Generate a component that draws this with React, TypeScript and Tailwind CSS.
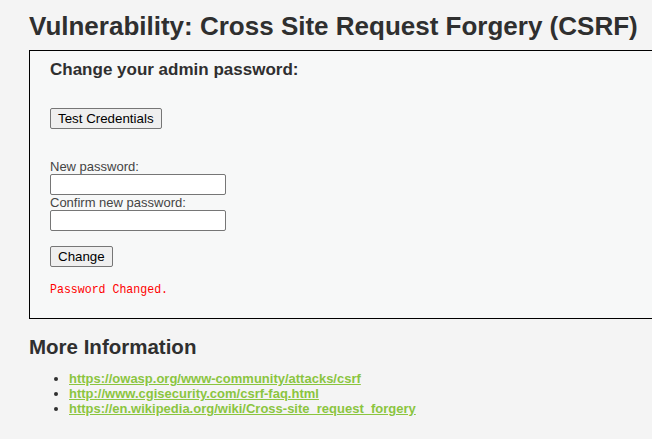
import React from "react";

export default function App() {
  return (
    <div className="w-[652px] h-[439px] overflow-hidden bg-[#f4f4f4] text-[#2f2f2f]" style={{ fontFamily: '"Liberation Sans", Arial, sans-serif' }}>
      <div className="pl-[29px] pt-[8px]">
        <h1 className="text-[26px] font-bold leading-[36px] text-[#2f2f2f] whitespace-nowrap">Vulnerability: Cross Site Request Forgery (CSRF)</h1>
        <div className="mt-[6px] w-[640px] h-[269px] border border-black bg-[#f7f8f8] pl-[20px] pt-[9px]">
          <h3 className="text-[17px] font-bold leading-[20px]">Change your admin password:</h3>
          <button className="mt-[28px] h-[21px] px-[7px] text-[13.33px] leading-[15px] text-black bg-[#efefef] border border-[#767676] rounded-[2px]">Test Credentials</button>
          <div className="mt-[29px] text-[13px] leading-[15px] text-[#444]">New password:</div>
          <input type="password" className="block w-[176px] h-[21px] bg-white border border-[#767676] rounded-[2px]" />
          <div className="text-[13px] leading-[15px] text-[#444]">Confirm new password:</div>
          <input type="password" className="block w-[176px] h-[21px] bg-white border border-[#767676] rounded-[2px]" />
          <button className="mt-[15px] h-[21px] px-[7px] text-[13.33px] leading-[15px] text-black bg-[#efefef] border border-[#767676] rounded-[2px]">Change</button>
          <pre className="block w-max mt-[14px] origin-left scale-x-[0.89] text-[13px] leading-[16px] text-[#ff0000]" style={{ fontFamily: '"Liberation Mono", "DejaVu Sans Mono", monospace' }}>Password Changed.</pre>
        </div>
        <h2 className="mt-[16px] text-[20.5px] font-bold leading-[24px]">More Information</h2>
        <ul className="mt-[12px] pl-[40px] list-disc text-[13px] leading-[15px]">
          <li><a href="#" className="font-bold underline text-[#8bc53f]">https://owasp.org/www-community/attacks/csrf</a></li>
          <li><a href="#" className="font-bold underline text-[#8bc53f]">http://www.cgisecurity.com/csrf-faq.html</a></li>
          <li><a href="#" className="font-bold underline text-[#8bc53f]">https://en.wikipedia.org/wiki/Cross-site_request_forgery</a></li>
        </ul>
      </div>
    </div>
  );
}
